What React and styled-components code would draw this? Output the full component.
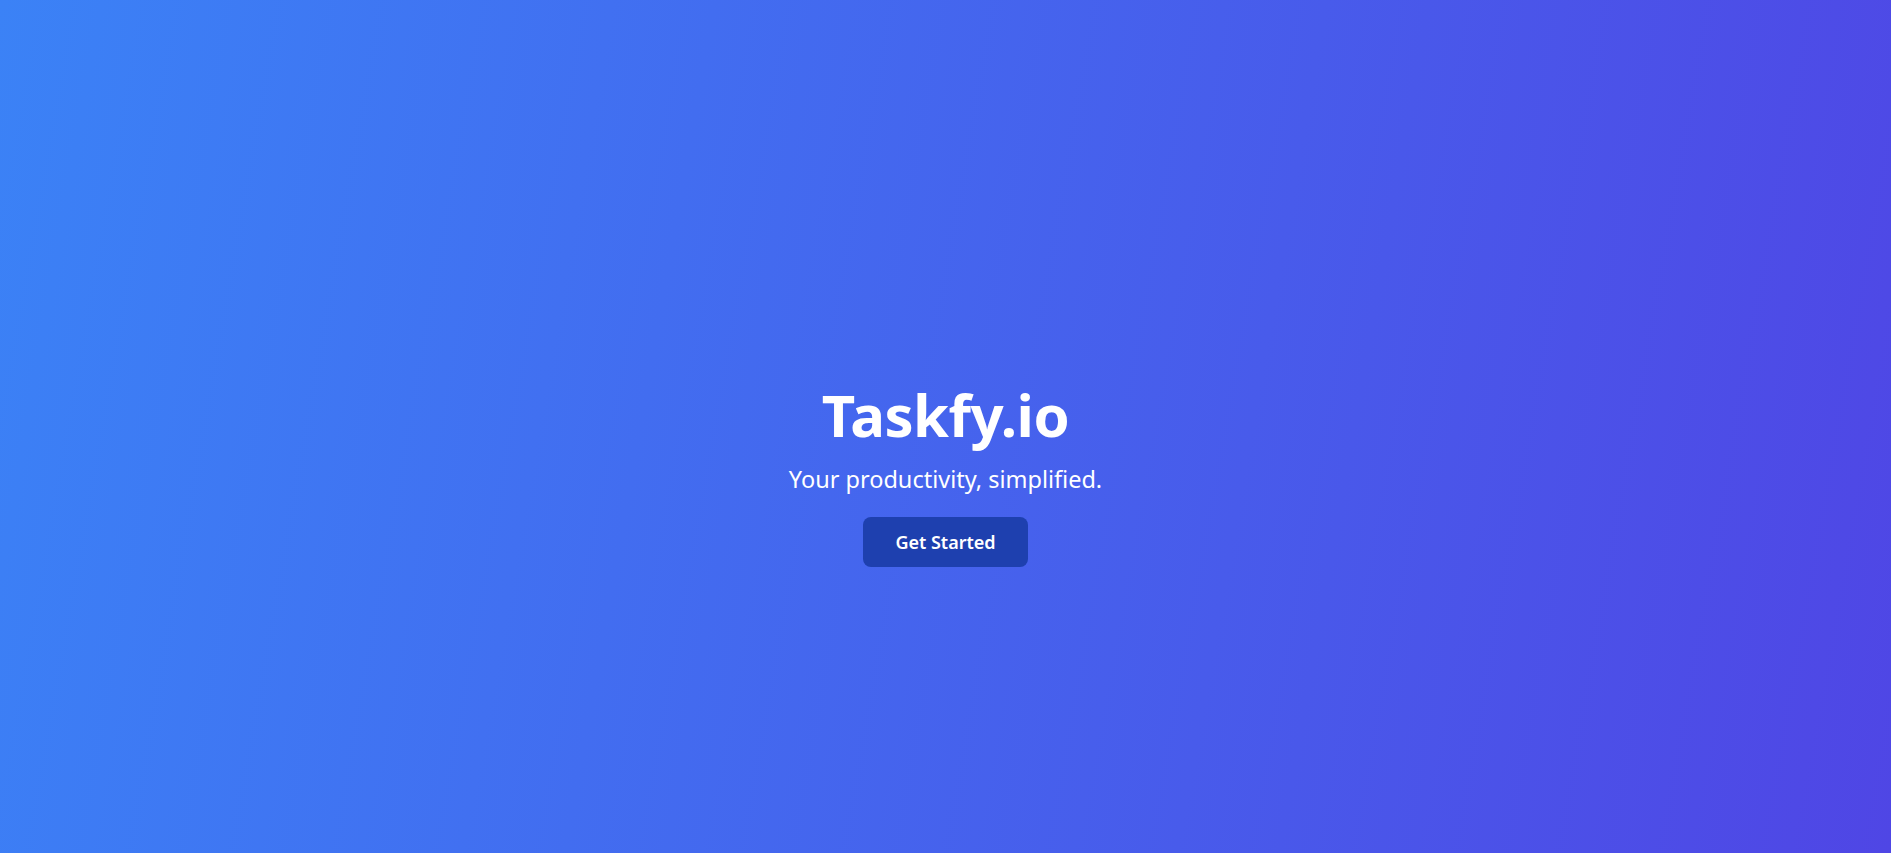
import React from 'react'
import styled, {createGlobalStyle} from 'styled-components'

const GlobalStyle = createGlobalStyle`
    html, body {
        margin: 0;
        padding: 0;
    }
    body {
        font-family: "Noto Sans", "Open Sans", "Liberation Sans", sans-serif;
    }
`

function App() {
    return (
        <>
            <GlobalStyle />
            <StyledHero>
                <Title>Taskfy.io</Title>
                <Tagline>Your productivity, simplified.</Tagline>
                <StartButton type="button">Get Started</StartButton>
            </StyledHero>
        </>
    )
}

const StyledHero = styled.main`
    box-sizing: border-box;
    display: flex;
    flex-direction: column;
    align-items: center;
    justify-content: center;
    height: 100vh;
    padding-top: 100px;
    background: linear-gradient(100deg, #3b82f6, #4f46e5);
    color: white;
    text-align: center;
    overflow: hidden;
`

const Title = styled.h1`
    margin: 0 0 19px;
    font-size: 58px;
    line-height: 1;
    font-weight: 700;
    letter-spacing: -0.5px;
`

const Tagline = styled.p`
    margin: 0 0 22px;
    font-size: 23.5px;
    line-height: 32px;
`

const StartButton = styled.button`
    font-family: inherit;
    font-size: 18px;
    line-height: 26px;
    font-weight: 600;
    color: white;
    background: #1e40af;
    border: none;
    border-radius: 8px;
    padding: 12px 32px;
    cursor: pointer;
`

export default App
